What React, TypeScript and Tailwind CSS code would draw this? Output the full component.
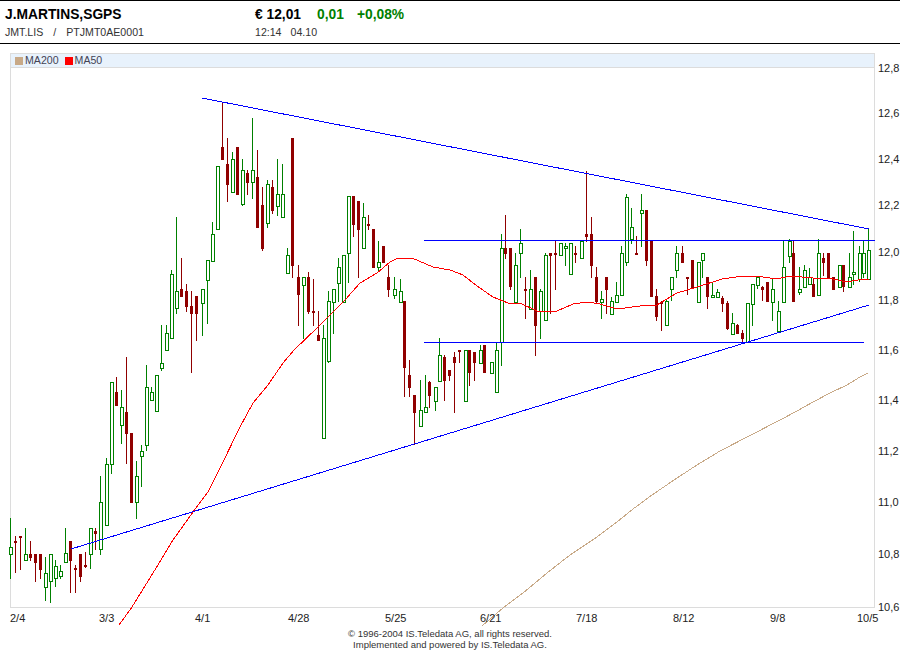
// Kurschart J.Martins: Kerzen + MA50 / MA200 + Trendlinien
type Candle = [number, number, number, number, number, 0 | 1]; // x, high, bodyTop, bodyBottom, low, up

const candles: Candle[] = [
  [10.7, 518, 547, 554, 579, 1], [15.7, 536, 541, 542, 573, 0], [20.3, 536, 536, 537, 570, 0], [25.7, 528, 554, 560, 561, 1],
  [30.3, 541, 554, 557, 561, 0], [35.3, 554, 554, 562, 582, 0], [40.3, 554, 554, 569, 579, 0], [45.7, 557, 573, 587, 601, 1],
  [50.7, 554, 554, 581, 603, 1], [55.7, 560, 566, 578, 587, 1], [60.7, 565, 571, 576, 579, 1], [65.7, 528, 553, 562, 563, 1],
  [70.3, 541, 541, 560, 593, 0], [75.3, 565, 568, 569, 593, 0], [80.3, 554, 554, 576, 582, 0], [85.3, 552, 565, 566, 568, 0],
  [90.7, 528, 528, 554, 569, 1], [95.3, 528, 531, 533, 550, 0], [100.7, 476, 502, 549, 555, 1], [106.7, 458, 464, 525, 526, 1],
  [111.7, 382, 382, 464, 474, 1], [116.3, 377, 392, 405, 406, 0], [121.7, 390, 407, 425, 444, 1], [126.3, 357, 412, 433, 464, 0],
  [131.3, 433, 433, 502, 503, 0], [136.7, 461, 476, 502, 519, 1], [141.7, 445, 451, 456, 487, 1], [146.7, 365, 387, 445, 451, 1],
  [151.7, 387, 392, 400, 400, 1], [156.7, 375, 375, 411, 411, 1], [161.7, 325, 363, 368, 371, 1], [166.7, 325, 333, 350, 350, 1],
  [171.7, 270, 274, 338, 338, 1], [176.7, 217, 291, 308, 314, 1], [181.3, 258, 289, 296, 297, 0], [186.3, 284, 291, 306, 312, 0],
  [191.7, 291, 306, 313, 373, 0], [196.7, 296, 296, 313, 341, 0], [202.3, 289, 289, 303, 336, 1], [207.7, 260, 260, 280, 324, 1],
  [212.7, 222, 234, 261, 261, 1], [217.7, 166, 166, 229, 229, 1], [222.3, 103, 147, 159, 160, 0], [227.3, 138, 164, 184, 202, 0],
  [232.7, 152, 159, 192, 192, 1], [237.3, 147, 147, 194, 195, 0], [242.7, 159, 170, 204, 206, 1], [247.3, 170, 173, 182, 195, 0],
  [252.7, 118, 170, 182, 199, 1], [257.3, 150, 177, 227, 228, 0], [262.3, 187, 205, 248, 251, 0], [267.7, 180, 184, 223, 228, 1],
  [272.3, 180, 187, 210, 214, 0], [277.7, 159, 194, 206, 216, 1], [282.7, 164, 194, 217, 217, 1], [287.7, 248, 255, 273, 273, 1],
  [292.3, 138, 138, 265, 278, 0], [298.3, 265, 277, 294, 326, 0], [303.7, 277, 277, 285, 339, 1], [308.3, 272, 277, 311, 314, 0],
  [313.3, 279, 311, 312, 326, 0], [318.3, 311, 335, 340, 341, 0], [323.7, 325, 338, 438, 438, 1], [328.7, 291, 301, 361, 363, 1],
  [333.7, 289, 289, 302, 334, 1], [338.7, 258, 267, 283, 302, 1], [343.7, 255, 255, 302, 302, 1], [348.7, 196, 196, 253, 283, 1],
  [353.3, 196, 196, 224, 237, 0], [358.3, 201, 201, 229, 278, 0], [363.7, 203, 217, 248, 248, 1], [368.3, 215, 224, 225, 230, 0],
  [373.3, 229, 229, 267, 268, 0], [378.7, 241, 262, 267, 272, 1], [383.3, 246, 246, 262, 263, 0], [388.3, 265, 277, 289, 297, 0],
  [394.7, 277, 289, 295, 299, 1], [400, 279, 291, 302, 302, 1], [404.3, 301, 301, 367, 397, 0], [409.3, 360, 375, 387, 397, 0],
  [414.3, 395, 395, 412, 445, 0], [420, 380, 410, 426, 426, 1], [425, 375, 407, 412, 412, 1], [429.3, 381, 382, 395, 408, 0],
  [435, 387, 387, 401, 411, 1], [439.3, 338, 355, 381, 381, 1], [444.3, 355, 357, 380, 401, 0], [449.3, 370, 370, 375, 381, 0],
  [454.3, 352, 357, 362, 413, 0], [459.3, 350, 350, 351, 363, 0], [465, 350, 350, 401, 401, 1], [469.3, 350, 350, 372, 386, 0],
  [474.3, 352, 352, 362, 381, 0], [480, 345, 350, 363, 363, 1], [484.3, 345, 345, 372, 373, 0], [491, 362, 362, 373, 373, 1],
  [496, 342, 350, 392, 392, 1], [501, 234, 248, 342, 366, 1], [505.3, 215, 248, 253, 259, 0], [510.3, 248, 248, 286, 290, 0],
  [515.7, 253, 265, 302, 302, 1], [520.7, 229, 243, 253, 278, 1], [525.3, 277, 289, 290, 319, 0], [530.7, 270, 289, 309, 309, 1],
  [535.3, 277, 277, 325, 356, 0], [540.7, 289, 291, 311, 339, 1], [545.7, 253, 255, 320, 320, 1], [550.3, 253, 253, 255, 314, 0],
  [555.3, 241, 253, 254, 290, 0], [560.7, 243, 243, 255, 255, 1], [565.7, 243, 246, 248, 266, 1], [570.7, 243, 243, 274, 274, 1],
  [575.3, 246, 253, 254, 263, 0], [581, 241, 241, 258, 258, 1], [586, 171, 234, 236, 242, 0], [591, 217, 234, 265, 278, 0],
  [596, 267, 277, 301, 303, 0], [601.7, 291, 299, 302, 319, 1], [606.3, 277, 277, 289, 314, 0], [611.7, 297, 301, 314, 314, 1],
  [616.7, 282, 295, 302, 302, 1], [621.7, 246, 253, 295, 295, 1], [626.7, 194, 197, 262, 266, 1], [631.3, 208, 227, 239, 244, 1],
  [636.3, 236, 253, 254, 254, 0], [641.7, 194, 210, 213, 247, 1], [646.3, 210, 210, 260, 266, 0], [651.7, 241, 241, 296, 297, 0],
  [656.3, 289, 296, 316, 321, 0], [661.3, 301, 302, 303, 331, 0], [666.7, 299, 301, 325, 325, 1], [671.7, 277, 277, 289, 301, 1],
  [676.7, 246, 253, 270, 278, 1], [682.3, 246, 253, 262, 263, 0], [687.3, 277, 277, 278, 295, 0], [692.3, 260, 260, 288, 289, 0],
  [698, 262, 262, 302, 302, 1], [702.7, 253, 253, 260, 278, 1], [707.7, 277, 277, 296, 309, 0], [712.7, 282, 295, 297, 297, 1],
  [717.7, 289, 292, 297, 297, 1], [722.3, 296, 298, 303, 312, 0], [727.3, 301, 303, 328, 330, 0], [732.7, 313, 323, 334, 334, 1],
  [737.3, 324, 325, 333, 333, 0], [742.3, 330, 333, 338, 342, 0], [747.3, 303, 303, 342, 342, 1], [752.7, 284, 284, 304, 326, 1],
  [757.7, 277, 277, 285, 289, 1], [762.7, 286, 287, 289, 301, 0], [767.7, 282, 282, 301, 302, 0], [772.7, 278, 289, 302, 321, 1],
  [778.7, 301, 311, 331, 331, 1], [783.7, 241, 267, 302, 302, 1], [789, 239, 241, 256, 263, 1], [793.3, 241, 253, 301, 302, 0],
  [799, 267, 289, 292, 295, 1], [804, 265, 270, 287, 287, 1], [809, 268, 277, 284, 285, 1], [813.3, 279, 284, 296, 297, 0],
  [818.7, 239, 253, 295, 295, 1], [823.7, 253, 258, 262, 276, 0], [828.7, 253, 253, 277, 278, 0], [833.7, 277, 277, 289, 290, 0],
  [839, 265, 265, 287, 287, 1], [843.7, 265, 265, 286, 292, 0], [849, 253, 277, 287, 287, 1], [853.7, 231, 272, 274, 285, 1],
  [859, 246, 253, 279, 282, 1], [863.7, 241, 253, 273, 278, 1], [868.7, 229, 250, 279, 279, 1],
];

const ma50 =
  "119,625 132,607 153,573 173,540 193,512 208,492 220,468 240,427 253,403 268,385 283,363 294,350 317,328 333,312 345,300 360,283 377,273 390,262 398,258 412,258 433,267 450,270 463,275 477,286 493,297 508,303 520,303 537,311 557,311 573,304 587,302 600,304 617,309 640,306 657,305 677,293 697,287 722,279 743,276 763,277 777,279 790,276 813,278 833,279 847,282 863,279 869,279";
const ma200 =
  "482,626 503,608 523,593 547,573 570,555 597,537 617,522 633,509 652,495 677,478 697,465 720,451 780,420 797,411 813,402 830,393 847,385 860,377 868,373";

const yLabels: [string, number][] = [
  ["12,8", 68], ["12,6", 113], ["12,4", 159], ["12,2", 205], ["12,0", 252], ["11,8", 300],
  ["11,6", 350], ["11,4", 400], ["11,2", 451], ["11,0", 502], ["10,8", 554], ["10,6", 607],
];
const xLabels: [string, number][] = [
  ["2/4", 10], ["3/3", 99], ["4/1", 195], ["4/28", 288], ["5/25", 385], ["6/21", 480],
  ["7/18", 576], ["8/12", 673], ["9/8", 770], ["10/5", 857],
];

function CandleMark({ c }: { c: Candle }) {
  const [x, hi, top, bot, lo, up] = c;
  const px = Math.floor(x);
  if (up) {
    return (
      <g>
        <rect x={px} y={hi} width={1} height={lo - hi} fill="#008000" />
        <rect x={px - 0.5} y={top + 0.5} width={3} height={Math.max(bot - top, 1)} fill="#fff" stroke="#008000" />
      </g>
    );
  }
  return (
    <g>
      <rect x={px} y={hi} width={1} height={lo - hi} fill="#900000" />
      <rect x={px - 1} y={top} width={3} height={Math.max(bot - top, 1) + 1} fill="#900000" />
    </g>
  );
}

export default function App() {
  return (
    <div className="w-[900px] h-[650px] overflow-hidden bg-white text-black font-['Liberation_Sans',Arial,sans-serif]">
      {/* Kopfzeile */}
      <div className="h-[44px] border-t border-b border-black flex">
        <div className="w-[250px] pl-[5px] pt-[6px]">
          <div className="text-[13.8px] leading-[16px] font-bold">J.MARTINS,SGPS</div>
          <div className="flex mt-[2px] text-[10.6px] leading-[14px] text-[#333]">
            <span>JMT.LIS</span>
            <span className="ml-[10px]">/</span>
            <span className="ml-[10px]">PTJMT0AE0001</span>
          </div>
        </div>
        <div className="pl-[5px] pt-[6px]">
          <div className="flex text-[13.8px] leading-[16px] font-bold">
            <span>€ 12,01</span>
            <span className="ml-[16px] text-[#008000]">0,01</span>
            <span className="ml-[13px] text-[#008000]">+0,08%</span>
          </div>
          <div className="flex mt-[2px] text-[10.6px] leading-[14px] text-[#333]">
            <span>12:14</span>
            <span className="ml-[9px]">04.10</span>
          </div>
        </div>
      </div>

      {/* Legende */}
      <div className="mt-[9px] ml-[10px] w-[865px] h-[15px] border border-[#dcdcdc] bg-[#e8f2fc] flex items-center pl-[4px] pt-[1px] text-[10.6px] text-[#445]">
        <span className="w-[8px] h-[8px] bg-[#c8a987]" />
        <span className="ml-[2px]">MA200</span>
        <span className="ml-[6px] w-[8px] h-[8px] bg-[#ff0000]" />
        <span className="ml-[2px]">MA50</span>
      </div>

      {/* Chart */}
      <div className="ml-[10px] w-[865px] h-[540px] border-l border-r border-b border-[#dcdcdc]">
        <svg viewBox="11 68 863 539" className="block w-[863px] h-[539px] overflow-visible">
          <g shapeRendering="crispEdges">
            {candles.map((c) => (
              <CandleMark key={c[0]} c={c} />
            ))}
            <polyline points={ma200} fill="none" stroke="#c8a987" />
            <polyline points={ma50} fill="none" stroke="#ff0000" />
            <line x1={202} y1={98} x2={869} y2={229} stroke="#0000ff" />
            <line x1={71} y1={549} x2={869} y2={305} stroke="#0000ff" />
            <line x1={424} y1={240.5} x2={875} y2={240.5} stroke="#0000ff" />
            <line x1={424} y1={342.5} x2={864} y2={342.5} stroke="#0000ff" />
          </g>
          <g className="text-[11px]" fill="#222">
            {yLabels.map(([t, y]) => (
              <text key={t} x={878} y={y + 4}>
                {t}
              </text>
            ))}
            {xLabels.map(([t, x]) => (
              <text key={t} x={x} y={622}>
                {t}
              </text>
            ))}
          </g>
        </svg>
      </div>

      {/* Copyright */}
      <div className="mt-[20px] text-center text-[9.5px] leading-[11px] text-[#333]">
        <div>© 1996-2004 IS.Teledata AG, all rights reserved.</div>
        <div>Implemented and powered by IS.Teledata AG.</div>
      </div>
    </div>
  );
}
